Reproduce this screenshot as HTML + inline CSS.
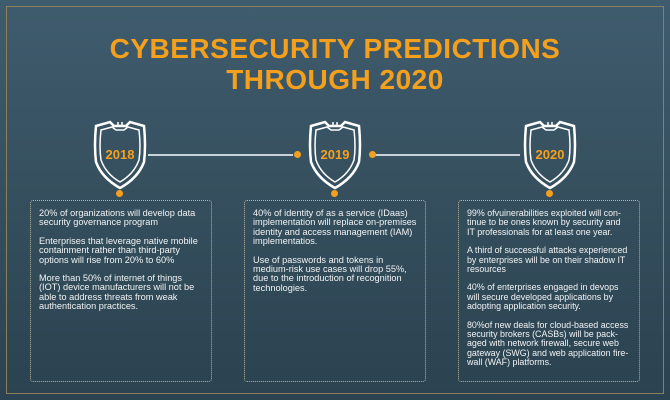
<!DOCTYPE html>
<html><head><meta charset="utf-8"><style>
body{margin:0;width:670px;height:400px;overflow:hidden;font-family:"Liberation Sans",sans-serif;}
.bg{position:absolute;left:0;top:0;width:670px;height:400px;background:linear-gradient(180deg,#3f5c6e 0%,#36505f 45%,#2b4250 100%);}
.frame{position:absolute;left:6px;top:6px;width:656px;height:386px;border:1px solid #8c7f5a;}
h1{position:absolute;left:0;top:33px;width:670px;margin:0;text-align:center;color:#f5a01c;font-size:28px;line-height:31px;font-weight:bold;letter-spacing:0.5px;}
.box{position:absolute;top:200px;width:164px;height:164px;border:1px dotted #b9b49a;border-radius:3px;padding:8px 8px;color:#f1f3f4;font-size:9.2px;line-height:9.4px;}
.box p{margin:0 0 9px 0;}
.b3{white-space:nowrap;font-size:8.9px;}
.dot{position:absolute;width:7px;height:7px;border-radius:50%;background:#f5a01c;}
.line{position:absolute;height:1.5px;background:#c8d2d8;top:154px;}
svg{position:absolute;}
.yr{position:absolute;width:60px;text-align:center;color:#f5a01c;font-weight:bold;font-size:13px;top:147px;}
</style></head><body>
<div class="bg"></div>
<div class="frame"></div>
<h1>CYBERSECURITY PREDICTIONS<br>THROUGH 2020</h1>

<div class="line" style="left:148px;width:145px"></div>
<div class="line" style="left:374px;width:146px"></div>
<div class="dot" style="left:294px;top:151px"></div>
<div class="dot" style="left:369px;top:151px"></div>

<svg style="left:92px;top:118px" width="56" height="72" viewBox="0 0 56 72"><path d="M4 8 L18 4 L22 8 L34 8 L38 4 L52 8 Q54 28 52 44 Q46 60 28 70 Q10 60 4 44 Q2 28 4 8Z" fill="none" stroke="#fff" stroke-width="2.5"/><path d="M9 12 L20 9 L24 12 L32 12 L36 9 L47 12 Q49 29 47 42 Q42 56 28 64 Q14 56 9 42 Q7 29 9 12Z" fill="none" stroke="#fff" stroke-width="1.5"/><path d="M26 4 L26 7 M30 4 L30 7" stroke="#fff" stroke-width="1.5"/></svg>
<svg style="left:307px;top:118px" width="56" height="72" viewBox="0 0 56 72"><path d="M4 8 L18 4 L22 8 L34 8 L38 4 L52 8 Q54 28 52 44 Q46 60 28 70 Q10 60 4 44 Q2 28 4 8Z" fill="none" stroke="#fff" stroke-width="2.5"/><path d="M9 12 L20 9 L24 12 L32 12 L36 9 L47 12 Q49 29 47 42 Q42 56 28 64 Q14 56 9 42 Q7 29 9 12Z" fill="none" stroke="#fff" stroke-width="1.5"/><path d="M26 4 L26 7 M30 4 L30 7" stroke="#fff" stroke-width="1.5"/></svg>
<svg style="left:522px;top:118px" width="56" height="72" viewBox="0 0 56 72"><path d="M4 8 L18 4 L22 8 L34 8 L38 4 L52 8 Q54 28 52 44 Q46 60 28 70 Q10 60 4 44 Q2 28 4 8Z" fill="none" stroke="#fff" stroke-width="2.5"/><path d="M9 12 L20 9 L24 12 L32 12 L36 9 L47 12 Q49 29 47 42 Q42 56 28 64 Q14 56 9 42 Q7 29 9 12Z" fill="none" stroke="#fff" stroke-width="1.5"/><path d="M26 4 L26 7 M30 4 L30 7" stroke="#fff" stroke-width="1.5"/></svg>
<div class="yr" style="left:90px">2018</div>
<div class="yr" style="left:305px">2019</div>
<div class="yr" style="left:520px">2020</div>

<div class="dot" style="left:116px;top:190px"></div>
<div class="dot" style="left:331px;top:190px"></div>
<div class="dot" style="left:546px;top:190px"></div>

<div class="box" style="left:30px"><p>20% of organizations will develop data security governance program</p><p>Enterprises that leverage native mobile containment rather than third-party options will rise from 20% to 60%</p><p>More than 50% of internet of things (IOT) device manufacturers will not be able to address threats from weak authentication practices.</p></div>
<div class="box" style="left:244px"><p>40% of identity of as a service (IDaas) implementation will replace on-premises identity and access management (IAM) implementatios.</p><p>Use of passwords and tokens in medium-risk use cases will drop 55%, due to the introduction of recognition technologies.</p></div>
<div class="box b3" style="left:458px"><p>99% ofvuinerabilities exploited will con-<br>tinue to be ones known by security and<br>IT professionals for at least one year.</p><p>A third of successful attacks experienced<br>by enterprises will be on their shadow IT<br>resources</p><p>40% of enterprises engaged in devops<br>will secure developed applications by<br>adopting application security.</p><p>80%of new deals for cloud-based access<br>security brokers (CASBs) will be pack-<br>aged with network firewall, secure web<br>gateway (SWG) and web application fire-<br>wall (WAF) platforms.</p></div>
</body></html>
